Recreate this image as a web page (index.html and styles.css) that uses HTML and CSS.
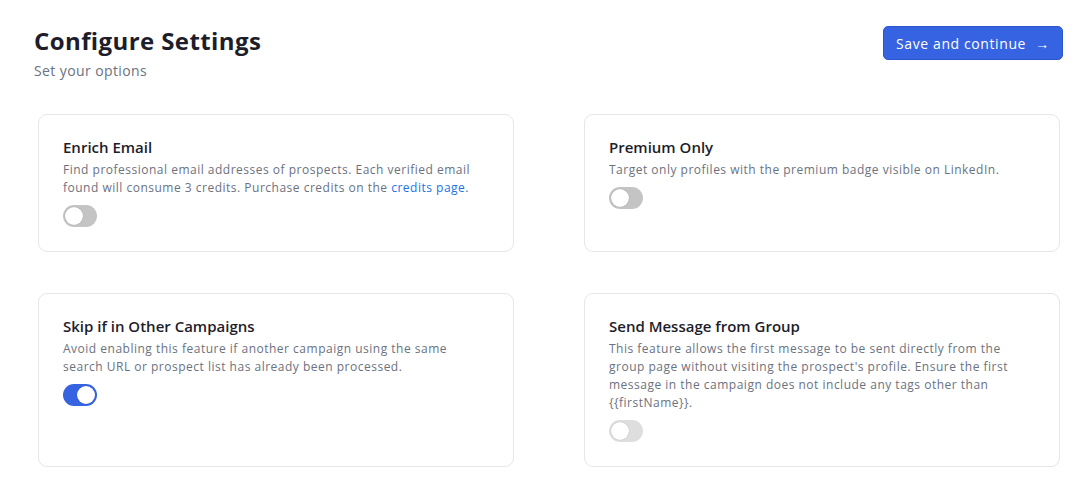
FILE: index.html
```html
<!DOCTYPE html>
<html lang="en">
<head>
  <meta charset="UTF-8">
  <meta name="viewport" content="width=device-width, initial-scale=1.0">
  <title>Configure Settings</title>
  <link rel="stylesheet" href="styles.css">
</head>
<body>
  <header class="page-head">
    <div>
      <h1>Configure Settings</h1>
      <p class="subtitle">Set your options</p>
    </div>
    <button class="btn-save">Save and continue <span class="arrow">&rarr;</span></button>
  </header>

  <main class="settings-grid">
    <div class="setting-card">
      <h3>Enrich Email</h3>
      <p>Find professional email addresses of prospects. Each verified email found will consume 3 credits. Purchase credits on the <a href="#">credits page.</a></p>
      <label class="switch"><input type="checkbox"><span class="slider"></span></label>
    </div>

    <div class="setting-card">
      <h3>Premium Only</h3>
      <p>Target only profiles with the premium badge visible on LinkedIn.</p>
      <label class="switch"><input type="checkbox"><span class="slider"></span></label>
    </div>

    <div class="setting-card">
      <h3>Skip if in Other Campaigns</h3>
      <p>Avoid enabling this feature if another campaign using the same search URL or prospect list has already been processed.</p>
      <label class="switch"><input type="checkbox" checked><span class="slider"></span></label>
    </div>

    <div class="setting-card">
      <h3>Send Message from Group</h3>
      <p>This feature allows the first message to be sent directly from the group page without visiting the prospect's profile. Ensure the first message in the campaign does not include any tags other than {{firstName}}.</p>
      <label class="switch disabled"><input type="checkbox" disabled><span class="slider"></span></label>
    </div>
  </main>
</body>
</html>
```

FILE: styles.css
```css
body {
  font-family: 'Open Sans', 'Liberation Sans', sans-serif;
  margin: 0;
  padding: 0;
  background: #fff;
  color: #1d1d2b;
}
.page-head {
  display: flex;
  justify-content: space-between;
  align-items: flex-start;
  padding: 26px 20px 0 34px;
}
.page-head h1 {
  margin: 0;
  font-size: 24px;
  line-height: 30px;
  font-weight: 700;
  letter-spacing: 0.4px;
  color: #1d1d2b;
}
.subtitle {
  margin: 5px 0 0;
  font-size: 14px;
  line-height: 20px;
  letter-spacing: 0.4px;
  color: #6b7280;
}
.btn-save {
  background-color: #3563e1;
  color: white;
  width: 180px;
  height: 34px;
  border: 1px solid #2c55d0;
  border-radius: 5px;
  font-family: inherit;
  font-size: 14px;
  font-weight: 500;
  letter-spacing: 0.6px;
  cursor: pointer;
}
.btn-save .arrow {
  margin-left: 5px;
}
.settings-grid {
  display: grid;
  grid-template-columns: 476px 476px;
  column-gap: 70px;
  row-gap: 41px;
  padding: 0 0 0 38px;
  margin-top: 33px;
}
.setting-card {
  border: 1px solid #e6e7eb;
  border-radius: 9px;
  padding: 22px 24px 24px;
}
.setting-card h3 {
  margin: 0 0 4px;
  font-size: 15px;
  line-height: 20px;
  font-weight: 600;
  color: #1d1d2b;
}
.setting-card p {
  margin: 0 0 8px;
  font-size: 12px;
  line-height: 18px;
  letter-spacing: 0.5px;
  color: #6b7280;
}
.setting-card a {
  color: #1a73e8;
  text-decoration: none;
}
.switch {
  position: relative;
  display: block;
  width: 34px;
  height: 22px;
  cursor: pointer;
}
.switch input {
  display: none;
}
.slider {
  position: absolute;
  inset: 0;
  background: #c4c4c4;
  border-radius: 11px;
}
.slider::before {
  content: '';
  position: absolute;
  left: 2px;
  top: 2px;
  width: 18px;
  height: 18px;
  border-radius: 50%;
  background: #fff;
  box-shadow: 0 0 1px rgba(0,0,0,0.3);
}
.switch input:checked + .slider {
  background: #3563e1;
}
.switch input:checked + .slider::before {
  left: 14px;
}
.switch.disabled .slider {
  background: #dedede;
}
```
